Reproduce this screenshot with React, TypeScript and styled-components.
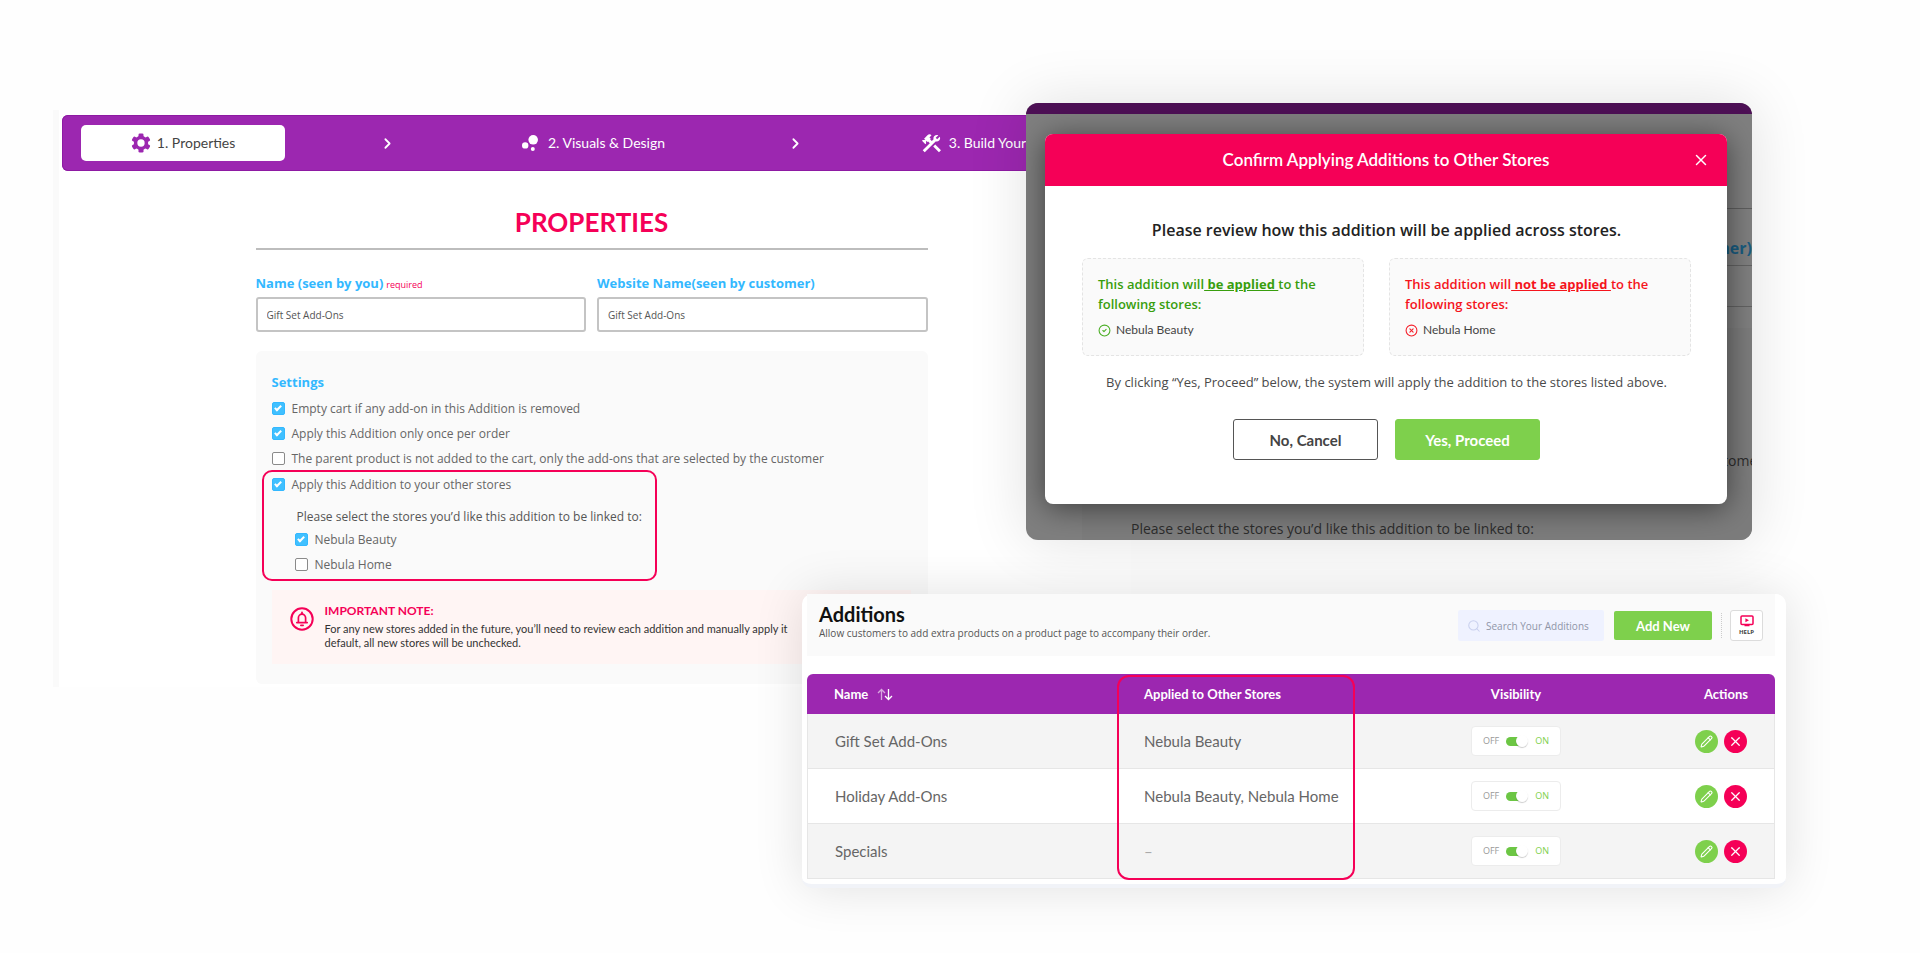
import React from 'react';
import styled, { createGlobalStyle, css } from 'styled-components';
import { Search, Pencil, X, ChevronRight, CircleCheck, CircleX } from 'lucide-react';
import { MdBubbleChart, MdConstruction } from 'react-icons/md';

const purple = '#9c27b0';
const pink = '#f50057';
const green = '#7ed04c';
const sky = '#33b8ff';

const sans = '"Open Sans", "Noto Sans", sans-serif';
const display = 'Lato, "Open Sans", sans-serif';

const GlobalStyle = createGlobalStyle`
  *, *::before, *::after { box-sizing: border-box; }
  body { margin: 0; background: #fefefe; font-family: ${sans}; color: #555; }
  h1, h2, h3, p { margin: 0; }
  button, input { font-family: inherit; }
`;

/* Three overlapping windows share one grid row; columns are the windows' edges. */
const Stage = styled.main`
  display: grid;
  grid-template-columns: 53fr 749fr 224fr 105fr 621fr 34fr 134fr;
  align-items: start;
  padding-bottom: 64px;
`;

/* ---------- Properties page ---------- */

const PropertiesPage = styled.section`
  grid-area: 1 / 2 / 2 / 5;
  min-width: 0;
  margin-top: 110px;
  padding: 5px 10px 3px 3px;
  border-left: 6px solid #fafafa;
  background: #fff;
`;

const StepBar = styled.nav`
  display: grid;
  grid-template-columns: repeat(5, 1fr);
  align-items: center;
  padding: 10px 19px;
  border-radius: 6px;
  background: ${purple};
  box-shadow: inset 0 0 0 1px #8e1aa3;
  color: #fff;
`;

const Step = styled.a<{ $active?: boolean; $start?: boolean }>`
  display: flex;
  align-items: center;
  justify-content: ${p => (p.$start ? 'flex-start' : 'center')};
  gap: 6px;
  height: 36px;
  padding: 0 ${p => (p.$start ? 22 : 0)}px;
  border-radius: 5px;
  font: 400 14px/20px ${display};
  white-space: nowrap;
  text-decoration: none;
  color: ${p => (p.$active ? '#444' : '#fff')};
  background: ${p => (p.$active ? '#fff' : 'transparent')};
`;

const StepArrow = styled.span`
  display: flex;
  justify-content: center;
`;

const Form = styled.form`
  width: 672px;
  max-width: 100%;
  margin: 35px auto 0;
`;

const PageTitle = styled.h1`
  padding-bottom: 10px;
  border-bottom: 2px solid #bdbdbd;
  font: 700 26px/32px ${display};
  text-align: center;
  color: ${pink};
`;

const FieldRow = styled.div`
  display: grid;
  grid-template-columns: 1fr 1fr;
  gap: 11px;
  margin-top: 21px;
`;

const FieldLabel = styled.label`
  display: flex;
  align-items: baseline;
  height: 24px;
  font: 700 13px/24px ${sans};
  white-space: nowrap;
  color: ${sky};
`;

const Required = styled.span`
  margin-left: 3px;
  font-size: 9px;
  font-weight: 400;
  color: ${pink};
`;

const TextInput = styled.input`
  display: block;
  width: 100%;
  height: 35px;
  margin-top: 2px;
  padding: 0 9px;
  border: 2px solid #c4c4c4;
  border-radius: 3px;
  background: #fff;
  font-size: 10px;
  color: #555;
`;

const SettingsCard = styled.section`
  margin-top: 19px;
  padding: 21px 17px 20px 16px;
  border-radius: 6px;
  background: #fafafa;
`;

const SettingsTitle = styled.h2`
  margin-bottom: 4px;
  font: 700 13px/20px ${sans};
  color: ${sky};
`;

const CheckRow = styled.label<{ $nested?: boolean }>`
  display: flex;
  align-items: center;
  gap: 7px;
  height: 25px;
  margin-left: ${p => (p.$nested ? 23 : 0)}px;
  font-size: 12px;
  white-space: nowrap;
  color: #666;
`;

const Checkbox = styled.input`
  appearance: none;
  display: flex;
  align-items: center;
  justify-content: center;
  width: 13px;
  height: 13px;
  margin: 0;
  border: 1px solid #8a8a8a;
  border-radius: 2px;
  background: #fff;

  &:checked {
    border-color: #33b8ff;
    background: #40c0ff;
  }
  &:checked::after {
    content: '';
    width: 4px;
    height: 7px;
    margin-bottom: 2px;
    border: solid #fff;
    border-width: 0 2px 2px 0;
    rotate: 45deg;
  }
`;

const LinkedStores = styled.fieldset`
  width: 395px;
  margin: -1px 0 0 -10px;
  padding: 0 0 2px 8px;
  border: 2px solid ${pink};
  border-radius: 10px;
`;

const LinkedPrompt = styled.p`
  margin: 10px 0 0 25px;
  font: 500 12px/20px ${sans};
  white-space: nowrap;
  color: #555;
`;

const Note = styled.aside`
  display: flex;
  gap: 11px;
  margin-top: 9px;
  padding: 13px 18px 14px;
  background: #fff5f4;

  svg { flex: none; margin-top: 4px; }
`;

const NoteTitle = styled.h3`
  font: 700 12px/16px ${display};
  color: ${pink};
`;

const NoteText = styled.p`
  margin-top: 3px;
  font: 400 11px/14px ${display};
  white-space: nowrap;
  color: #333;
`;

/* ---------- Confirmation window ---------- */

const ConfirmWindow = styled.section`
  grid-area: 1 / 4 / 2 / 6;
  display: grid;
  min-width: 0;
  margin-top: 103px;
  border-radius: 12px;
  overflow: hidden;
  background: #7f7f7f;
  box-shadow: 0 0 60px rgba(0, 0, 0, 0.12);
`;

const Backdrop = styled.div`
  grid-area: 1 / 1;
  display: flex;
  flex-direction: column;
  min-width: 0;
  height: 437px;
  overflow: hidden;
  border-top: 11px solid #4d1055;
  font: 400 14px/20px ${sans};
  white-space: nowrap;
  color: #2c2c2c;
`;

const BackdropRule = styled.div`
  flex: none;
  height: 1px;
  margin: 94px 0 0 56px;
  background: #5e5e5e;
`;

const BackdropLabel = styled.p`
  align-self: flex-end;
  margin-top: 27px;
  font: 700 16px/24px ${sans};
  color: #195c80;
`;

const BackdropField = styled.div`
  flex: none;
  height: 42px;
  margin: 5px 0 0 56px;
  border: solid #626262;
  border-width: 1px 0;
`;

const BackdropCard = styled.div`
  flex: 1;
  display: flex;
  flex-direction: column;
  align-items: flex-start;
  margin: 21px 0 0 56px;
  padding: 123px 0 0 49px;
  background: #7c7c7c;
`;

const BackdropOption = styled.p`
  align-self: flex-end;
  margin-right: -11px;
`;

const BackdropPrompt = styled.p`
  margin-top: 48px;
`;

const Dialog = styled.div`
  grid-area: 1 / 1;
  align-self: start;
  position: relative;
  margin: 31px 25px 36px 19px;
  border-radius: 8px;
  background: #fff;
  box-shadow: 0 4px 30px rgba(0, 0, 0, 0.5);
  text-align: center;
`;

const DialogHeader = styled.header`
  display: grid;
  grid-template-columns: 52px 1fr 52px;
  align-items: center;
  height: 52px;
  border-radius: 8px 8px 0 0;
  background: ${pink};
  color: #fff;
`;

const DialogTitle = styled.h2`
  grid-column: 2;
  font: 600 17px/24px ${display};
`;

const CloseButton = styled.button`
  display: flex;
  justify-content: center;
  padding: 0;
  border: 0;
  background: none;
  color: #fff;
`;

const DialogBody = styled.div`
  padding: 32px 36px 44px 37px;
`;

const DialogLead = styled.p`
  font: 600 16px/24px ${sans};
  color: #222;
`;

const StoreGroups = styled.div`
  display: grid;
  grid-template-columns: 282fr 302fr;
  gap: 25px;
  margin-top: 16px;
  text-align: left;
`;

const StoreGroup = styled.section`
  padding: 15px 15px 17px;
  border: 1px dashed #e4e4e4;
  border-radius: 6px;
  background: #fafafa;
`;

const StoreGroupTitle = styled.h3<{ $tone: string }>`
  max-width: 260px;
  font: 600 13px/20px ${sans};
  color: ${p => p.$tone};

  u { font-weight: 700; }
`;

const StoreItem = styled.p<{ $tone: string }>`
  display: flex;
  align-items: center;
  gap: 5px;
  margin-top: 8px;
  font: 400 12px/16px ${display};
  color: #444;

  svg { color: ${p => p.$tone}; }
`;

const DialogText = styled.p`
  margin-top: 16px;
  font: 400 13px/20px ${sans};
  color: #4a4a4a;
`;

const DialogActions = styled.div`
  display: flex;
  justify-content: center;
  gap: 17px;
  margin-top: 27px;
`;

const DialogButton = styled.button<{ $primary?: boolean }>`
  width: 145px;
  height: 41px;
  border: 1px solid #555;
  border-radius: 3px;
  background: #fff;
  font: 700 15px/20px ${display};
  color: #444;
  ${p => p.$primary && css`
    border-color: ${green};
    background: ${green};
    color: #fff;
  `}
`;

/* ---------- Additions list ---------- */

const AdditionsWindow = styled.section`
  grid-area: 1 / 3 / 2 / 7;
  min-width: 0;
  margin-top: 594px;
  padding: 0 11px 5px 5px;
  border-bottom: 4px solid #f1f3f8;
  border-radius: 10px;
  background: #fff;
  box-shadow: 0 0 50px rgba(0, 0, 0, 0.12);
`;

const ListHeader = styled.header`
  display: flex;
  justify-content: space-between;
  height: 62px;
  padding: 8px 12px;
  background: #fafafa;
`;

const ListTitle = styled.h2`
  font: 700 20px/24px ${display};
  color: #111;
`;

const ListSubtitle = styled.p`
  font: 400 10px/14px ${sans};
  color: #555;
`;

const Toolbar = styled.div`
  display: flex;
  align-items: center;
  height: 31px;
  margin-top: 8px;
`;

const SearchBox = styled.label`
  display: flex;
  align-items: center;
  gap: 5px;
  width: 146px;
  height: 31px;
  padding-left: 9px;
  border-radius: 2px;
  background: #eff2ff;
  color: #c9d0ee;

  svg { flex: none; }
`;

const SearchInput = styled.input`
  flex: 1;
  min-width: 0;
  padding: 0;
  border: 0;
  background: none;
  font-size: 10px;

  &::placeholder { color: #8f96a8; }
`;

const AddButton = styled.button`
  width: 98px;
  height: 29px;
  margin-left: 10px;
  border: 0;
  border-radius: 2px;
  background: ${green};
  font: 700 13px/20px ${display};
  color: #fff;
`;

const Divider = styled.span`
  height: 25px;
  margin: 0 8px 0 9px;
  border-left: 1px dotted #ccc;
`;

const HelpButton = styled.button`
  display: flex;
  flex-direction: column;
  align-items: center;
  justify-content: center;
  width: 33px;
  height: 31px;
  padding: 0;
  border: 1px solid #dcdcdc;
  border-radius: 3px;
  background: #fff;
  font: 700 6px/10px ${sans};
  color: #444;
`;

const TableFrame = styled.div`
  position: relative;
  margin-top: 18px;
`;

const Table = styled.table`
  width: 100%;
  table-layout: fixed;
  border-collapse: separate;
  border-spacing: 0;
  font: 400 15px/20px ${display};
  color: #666;
`;

const Col = styled.col<{ $width?: number }>`
  width: ${p => (p.$width ? `${p.$width}px` : 'auto')};
`;

const HeadCell = styled.th<{ $align?: string }>`
  height: 40px;
  padding: 0 27px;
  background: ${purple};
  font: 700 13px/20px ${display};
  text-align: ${p => p.$align || 'left'};
  color: #fff;

  &:first-child { border-radius: 6px 0 0 0; }
  &:last-child { border-radius: 0 6px 0 0; padding-left: 0; }
`;

const SortButton = styled.button`
  margin-left: 6px;
  padding: 0;
  border: 0;
  background: none;
  vertical-align: -2px;
`;

const Row = styled.tr`
  &:nth-child(odd) { background: #f4f4f4; }
`;

const Cell = styled.td<{ $align?: string; $muted?: boolean }>`
  height: 55px;
  padding: 0 27px;
  border-bottom: 1px solid #e6e6e6;
  text-align: ${p => p.$align || 'left'};
  white-space: nowrap;
  color: ${p => (p.$muted ? '#aaa' : 'inherit')};

  &:first-child { border-left: 1px solid #e6e6e6; }
  &:last-child { border-right: 1px solid #e6e6e6; padding-left: 0; }
`;

const Toggle = styled.label`
  display: inline-flex;
  align-items: center;
  justify-content: center;
  gap: 7px;
  width: 90px;
  height: 30px;
  border: 1px solid #ececec;
  border-radius: 4px;
  background: #fff;
  vertical-align: middle;
`;

const ToggleText = styled.span<{ $on?: boolean }>`
  font: 400 9px/12px ${sans};
  color: ${p => (p.$on ? green : '#999')};
`;

const Switch = styled.input`
  appearance: none;
  display: flex;
  align-items: center;
  justify-content: flex-end;
  width: 22px;
  height: 9px;
  margin: 0;
  border-radius: 5px;
  background: #ccc;

  &::after {
    content: '';
    flex: none;
    width: 12px;
    height: 12px;
    border-radius: 50%;
    background: #fff;
    box-shadow: 0 1px 1px rgba(0, 0, 0, 0.2);
  }
  &:checked { background: linear-gradient(to right, #6cc644 70%, transparent 70%); }
`;

const Actions = styled.div`
  display: flex;
  justify-content: flex-end;
  gap: 6px;
`;

const RoundButton = styled.button<{ $tone: string }>`
  display: flex;
  align-items: center;
  justify-content: center;
  width: 23px;
  height: 23px;
  padding: 0;
  border: 0;
  border-radius: 50%;
  background: ${p => p.$tone};
  color: #fff;
`;

const ColumnHighlight = styled.div`
  position: absolute;
  top: 1px;
  bottom: -1px;
  left: 310px;
  width: 238px;
  border: 2px solid ${pink};
  border-radius: 12px;
  pointer-events: none;
`;

/* ---------- Icons ---------- */

const GearIcon = () => (
  <svg width="20" height="20" viewBox="0 0 24 24" aria-hidden="true">
    <g fill={purple}>
      {[0, 60, 120].map(a => (
        <rect key={a} x="9" y="0.5" width="6" height="23" rx="1.5" transform={`rotate(${a} 12 12)`} />
      ))}
      <circle cx="12" cy="12" r="8.6" />
    </g>
    <circle cx="12" cy="12" r="4.4" fill="#fff" />
  </svg>
);

const BellIcon = () => (
  <svg width="24" height="24" viewBox="0 0 24 24" fill="none" stroke={pink} aria-hidden="true">
    <circle cx="12" cy="12" r="10.7" strokeWidth="2" />
    <path d="M8.4 15.2v-4.4a3.6 3.6 0 0 1 7.2 0v4.4M6.8 15.6h10.4" strokeWidth="1.7" strokeLinecap="round" />
    <path d="M12 6.6V5.4M10.9 18.3h2.2" strokeWidth="1.8" strokeLinecap="round" />
  </svg>
);

const SortIcon = () => (
  <svg width="16" height="13" viewBox="0 0 16 13" fill="none" stroke="#fff" strokeWidth="1.3" aria-hidden="true">
    <path d="M4.5 12V1.5M1 5l3.5-3.5L8 5" opacity="0.6" />
    <path d="M11.5 1v10.5M8 8l3.5 3.5L15 8" />
  </svg>
);

const VideoIcon = () => (
  <svg width="14" height="12" viewBox="0 0 14 12" aria-hidden="true">
    <rect x="1" y="1" width="12" height="8.4" rx="1" fill="none" stroke={pink} strokeWidth="1.5" />
    <path d="M5.4 3.2v4l3.6-2zM4.5 9.6h5v1.7h-5z" fill={pink} />
  </svg>
);

const settings = [
  { label: 'Empty cart if any add-on in this Addition is removed', checked: true },
  { label: 'Apply this Addition only once per order', checked: true },
  { label: 'The parent product is not added to the cart, only the add-ons that are selected by the customer', checked: false },
];

const additions = [
  { name: 'Gift Set Add-Ons', stores: 'Nebula Beauty' },
  { name: 'Holiday Add-Ons', stores: 'Nebula Beauty, Nebula Home' },
  { name: 'Specials', stores: '–' },
];

const Option = ({ label, checked, nested }: { label: string; checked: boolean; nested?: boolean }) => (
  <CheckRow $nested={nested}>
    <Checkbox type="checkbox" defaultChecked={checked} />
    {label}
  </CheckRow>
);

const Properties = () => (
  <PropertiesPage>
    <StepBar>
      <Step href="#properties" $active><GearIcon />1. Properties</Step>
      <StepArrow><ChevronRight size={17} strokeWidth={2.5} /></StepArrow>
      <Step href="#visuals"><MdBubbleChart size={24} />2. Visuals &amp; Design</Step>
      <StepArrow><ChevronRight size={17} strokeWidth={2.5} /></StepArrow>
      <Step href="#build" $start><MdConstruction size={23} />3. Build Your</Step>
    </StepBar>
    <Form>
      <PageTitle>PROPERTIES</PageTitle>
      <FieldRow>
        <div>
          <FieldLabel htmlFor="name">Name (seen by you)<Required>required</Required></FieldLabel>
          <TextInput id="name" defaultValue="Gift Set Add-Ons" />
        </div>
        <div>
          <FieldLabel htmlFor="website-name">Website Name(seen by customer)</FieldLabel>
          <TextInput id="website-name" defaultValue="Gift Set Add-Ons" />
        </div>
      </FieldRow>
      <SettingsCard>
        <SettingsTitle>Settings</SettingsTitle>
        {settings.map(s => <Option key={s.label} {...s} />)}
        <LinkedStores>
          <Option label="Apply this Addition to your other stores" checked />
          <LinkedPrompt>Please select the stores you’d like this addition to be linked to:</LinkedPrompt>
          <Option nested label="Nebula Beauty" checked />
          <Option nested label="Nebula Home" checked={false} />
        </LinkedStores>
        <Note>
          <BellIcon />
          <div>
            <NoteTitle>IMPORTANT NOTE:</NoteTitle>
            <NoteText>
              For any new stores added in the future, you’ll need to review each addition and manually apply it
              <br />
              default, all new stores will be unchecked.
            </NoteText>
          </div>
        </Note>
      </SettingsCard>
    </Form>
  </PropertiesPage>
);

const Confirm = () => (
  <ConfirmWindow>
    <Backdrop>
      <BackdropRule />
      <BackdropLabel>customer)</BackdropLabel>
      <BackdropField />
      <BackdropCard>
        <BackdropOption>customer</BackdropOption>
        <BackdropPrompt>Please select the stores you’d like this addition to be linked to:</BackdropPrompt>
      </BackdropCard>
    </Backdrop>
    <Dialog role="dialog" aria-labelledby="confirm-title">
      <DialogHeader>
        <DialogTitle id="confirm-title">Confirm Applying Additions to Other Stores</DialogTitle>
        <CloseButton aria-label="Close"><X size={18} strokeWidth={2} /></CloseButton>
      </DialogHeader>
      <DialogBody>
        <DialogLead>Please review how this addition will be applied across stores.</DialogLead>
        <StoreGroups>
          <StoreGroup>
            <StoreGroupTitle $tone="#389e0d">This addition will<u> be applied </u>to the following stores:</StoreGroupTitle>
            <StoreItem $tone="#4caf26"><CircleCheck size={13} />Nebula Beauty</StoreItem>
          </StoreGroup>
          <StoreGroup>
            <StoreGroupTitle $tone="#f5141c">This addition will<u> not be applied </u>to the following stores:</StoreGroupTitle>
            <StoreItem $tone="#f5222d"><CircleX size={13} />Nebula Home</StoreItem>
          </StoreGroup>
        </StoreGroups>
        <DialogText>By clicking “Yes, Proceed” below, the system will apply the addition to the stores listed above.</DialogText>
        <DialogActions>
          <DialogButton>No, Cancel</DialogButton>
          <DialogButton $primary>Yes, Proceed</DialogButton>
        </DialogActions>
      </DialogBody>
    </Dialog>
  </ConfirmWindow>
);

const Additions = () => (
  <AdditionsWindow>
    <ListHeader>
      <div>
        <ListTitle>Additions</ListTitle>
        <ListSubtitle>Allow customers to add extra products on a product page to accompany their order.</ListSubtitle>
      </div>
      <Toolbar>
        <SearchBox>
          <Search size={14} strokeWidth={1.8} />
          <SearchInput type="text" placeholder="Search Your Additions" aria-label="Search Your Additions" />
        </SearchBox>
        <AddButton>Add New</AddButton>
        <Divider />
        <HelpButton><VideoIcon />HELP</HelpButton>
      </Toolbar>
    </ListHeader>
    <TableFrame>
      <Table>
        <colgroup>
          <Col $width={310} />
          <Col $width={240} />
          <Col />
          <Col $width={100} />
        </colgroup>
        <thead>
          <tr>
            <HeadCell>Name <SortButton aria-label="Sort by name"><SortIcon /></SortButton></HeadCell>
            <HeadCell>Applied to Other Stores</HeadCell>
            <HeadCell $align="center">Visibility</HeadCell>
            <HeadCell $align="right">Actions</HeadCell>
          </tr>
        </thead>
        <tbody>
          {additions.map(a => (
            <Row key={a.name}>
              <Cell>{a.name}</Cell>
              <Cell $muted={a.stores === '–'}>{a.stores}</Cell>
              <Cell $align="center">
                <Toggle>
                  <ToggleText>OFF</ToggleText>
                  <Switch type="checkbox" role="switch" defaultChecked />
                  <ToggleText $on>ON</ToggleText>
                </Toggle>
              </Cell>
              <Cell>
                <Actions>
                  <RoundButton $tone={green} aria-label={`Edit ${a.name}`}><Pencil size={13} strokeWidth={2} /></RoundButton>
                  <RoundButton $tone={pink} aria-label={`Delete ${a.name}`}><X size={15} strokeWidth={2} /></RoundButton>
                </Actions>
              </Cell>
            </Row>
          ))}
        </tbody>
      </Table>
      <ColumnHighlight />
    </TableFrame>
  </AdditionsWindow>
);

export default function App() {
  return (
    <>
      <GlobalStyle />
      <Stage>
        <Properties />
        <Confirm />
        <Additions />
      </Stage>
    </>
  );
}
